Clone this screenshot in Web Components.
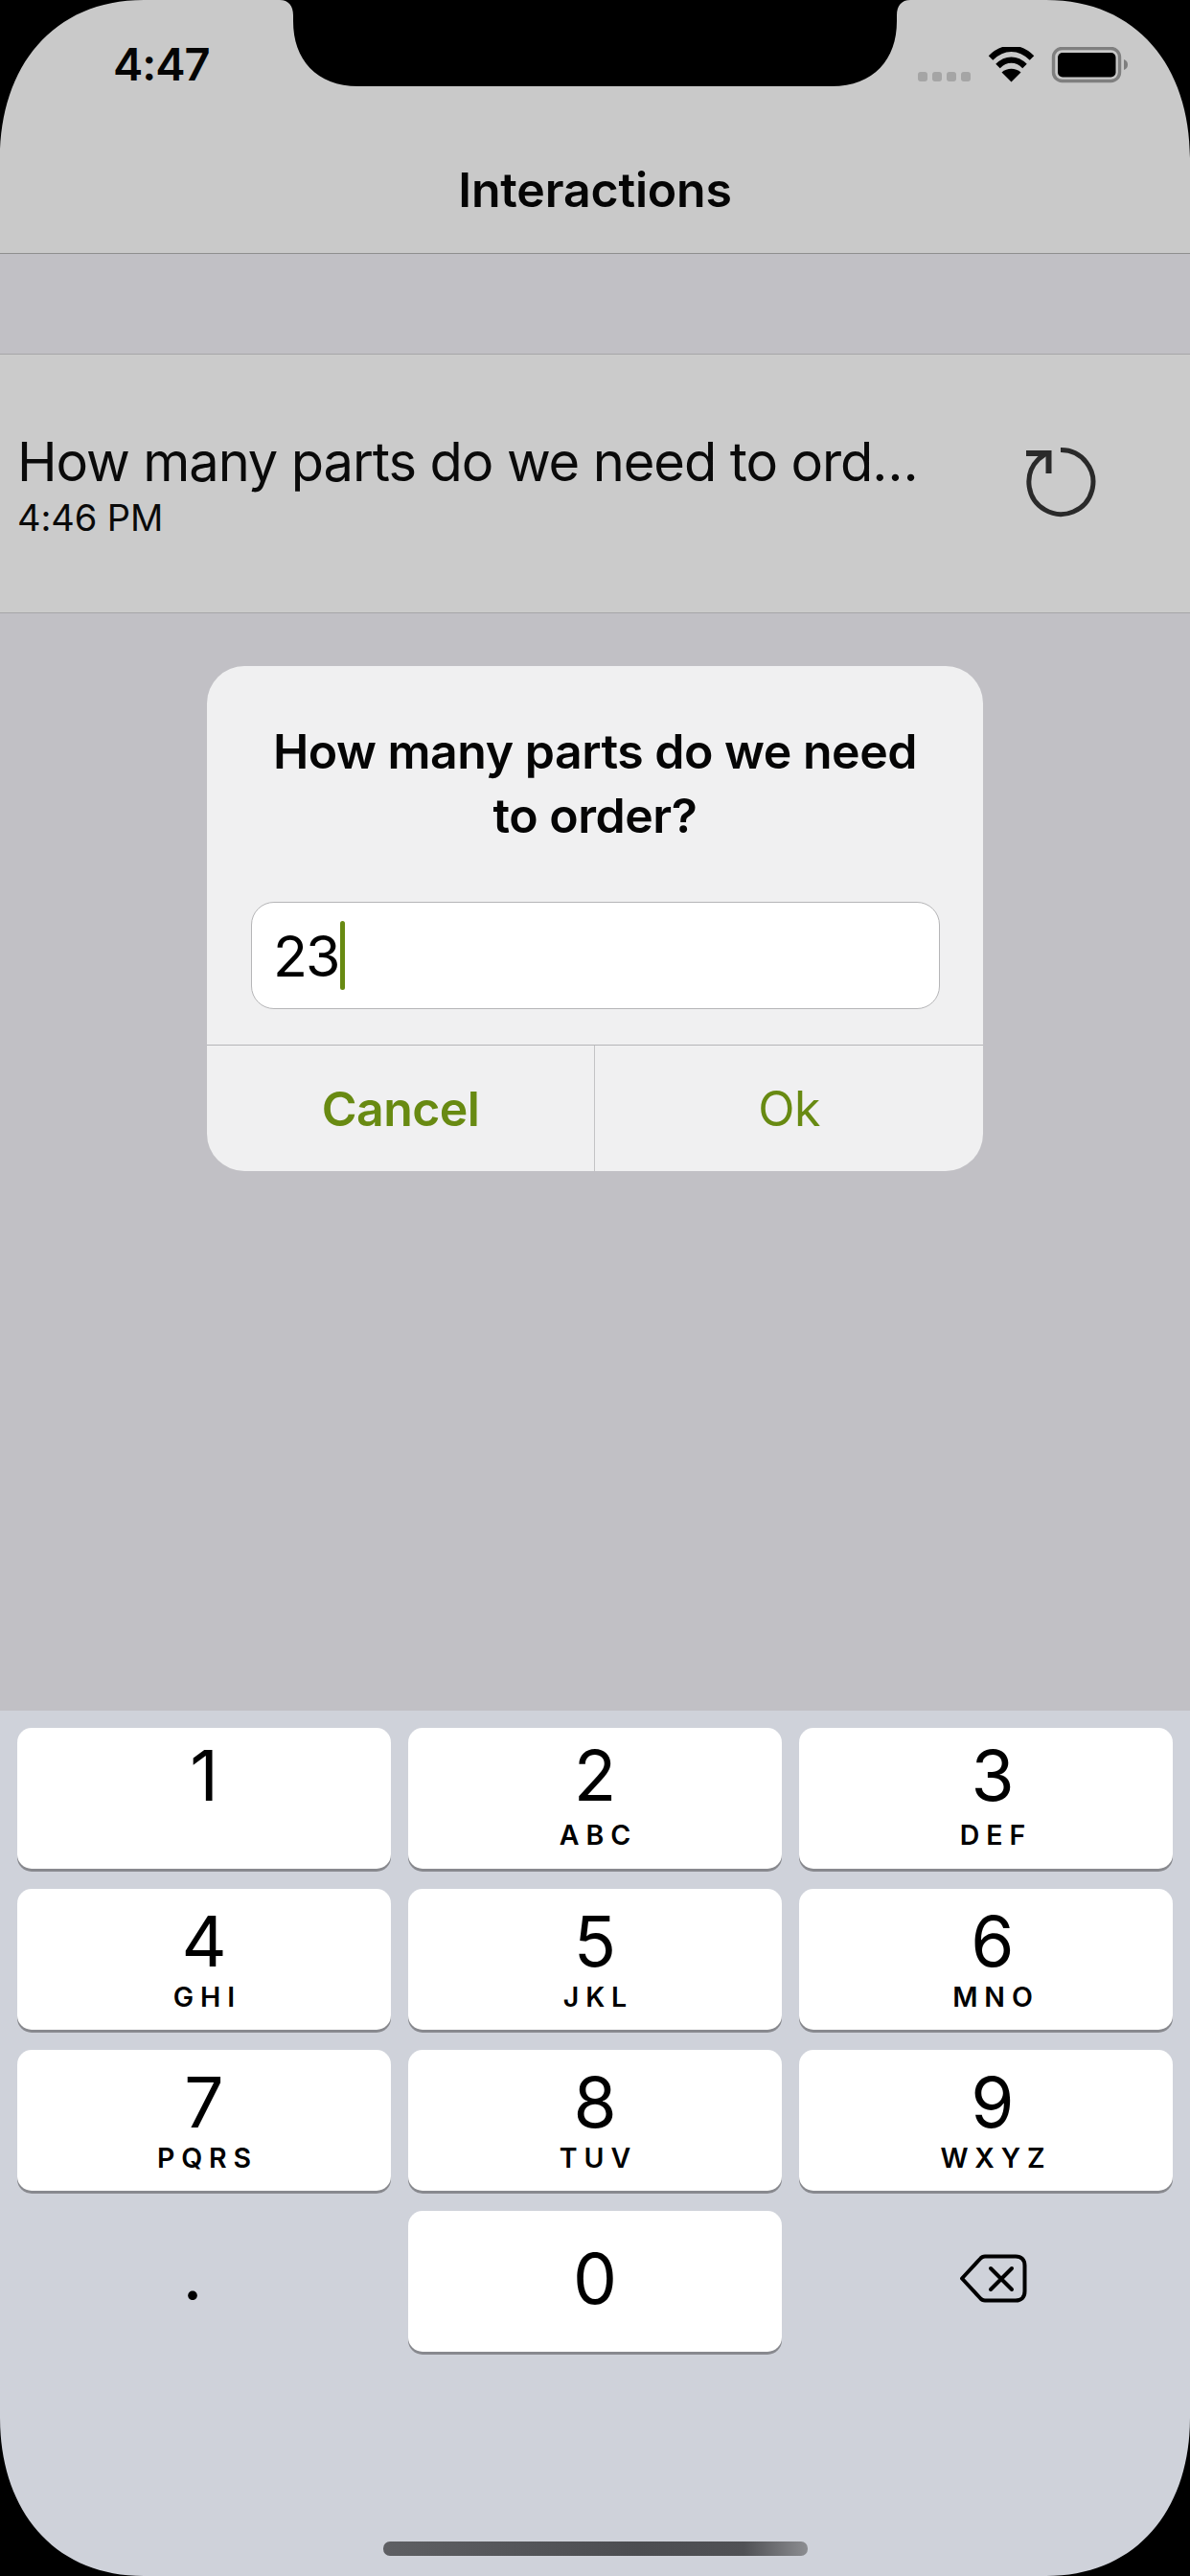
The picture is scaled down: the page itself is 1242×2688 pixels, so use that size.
<!DOCTYPE html>
<html>
<head>
<meta charset="utf-8">
<style>
html, body { margin: 0; padding: 0; background: #000; }
body { width: 1242px; height: 2688px; overflow: hidden; font-family: Inter, "Liberation Sans", sans-serif; color: #000; }
interactions-screen { height: 2688px; }
</style>
</head>
<body>
<interactions-screen>
  <status-bar slot="top" time="4:47"></status-bar>
  <nav-bar slot="top">Interactions</nav-bar>
  <interaction-row slot="list" time="4:46 PM">How many parts do we need to ord…</interaction-row>
  <alert-dialog slot="overlay" value="23" cancel="Cancel" ok="Ok">How many parts do we need<br>to order?</alert-dialog>
  <num-pad slot="keyboard">
    <num-key digit="1" high></num-key>
    <num-key digit="2" letters="ABC" high></num-key>
    <num-key digit="3" letters="DEF" high right></num-key>
    <num-key digit="4" letters="GHI"></num-key>
    <num-key digit="5" letters="JKL"></num-key>
    <num-key digit="6" letters="MNO" right></num-key>
    <num-key digit="7" letters="PQRS"></num-key>
    <num-key digit="8" letters="TUV"></num-key>
    <num-key digit="9" letters="WXYZ" right></num-key>
    <num-key digit="." plain></num-key>
    <num-key digit="0" lone></num-key>
    <delete-key></delete-key>
  </num-pad>
  <device-mask slot="overlay"></device-mask>
</interactions-screen>

<script>
const FONT = `Inter, "Liberation Sans", sans-serif`;
const GREEN = "#688a12";

class StatusBar extends HTMLElement {
  constructor() {
    super();
    var root = this.attachShadow({ mode: "open" });
    root.innerHTML = `
<style>
:host { display: flex; align-items: flex-start; justify-content: space-between; height: 90px; padding: 0 65px 0 118px; font-family: ${FONT}; }
.time { font-size: 47px; font-weight: 600; line-height: 34px; margin-top: 50px; letter-spacing: -1px; color: #050505; }
.icons { display: flex; align-items: flex-start; margin-top: 49px; }
svg { display: block; }
</style>
<div class="time"></div>
<div class="icons">
  <svg width="220" height="38" viewBox="957 49 220 38">
    <g fill="#a5a5a5">
      <rect x="958" y="75" width="10" height="10" rx="3"/>
      <rect x="973" y="75" width="10" height="10" rx="3"/>
      <rect x="988" y="75" width="10" height="10" rx="3"/>
      <rect x="1003" y="75" width="10" height="10" rx="3"/>
    </g>
    <g fill="none" stroke="#000" stroke-width="6.4">
      <path d="M1034 60.5 C1047 47.5 1064 47.5 1077 60.5"/>
      <path d="M1041.5 69 C1050 60.5 1061 60.5 1069.5 69"/>
    </g>
    <path d="M1055.5 85.5 L1045.5 75.5 C1051 70.5 1060 70.5 1065.5 75.5 Z" fill="#000"/>
    <rect x="1099.5" y="50.5" width="69" height="34" rx="9" fill="none" stroke="#7f7f7f" stroke-width="3.4"/>
    <rect x="1104" y="55" width="60.5" height="25.5" rx="5" fill="#000"/>
    <path d="M1173 62 C1176 63 1177 65 1177 67.5 C1177 70 1176 72 1173 73 Z" fill="#7f7f7f"/>
  </svg>
</div>`;
    root.querySelector(".time").textContent = this.getAttribute("time");
  }
}

class NavBar extends HTMLElement {
  constructor() {
    super();
    var root = this.attachShadow({ mode: "open" });
    root.innerHTML = `
<style>
:host { display: flex; justify-content: center; box-sizing: border-box; height: 175px; padding-top: 80px; border-bottom: 1px solid #8f8f8f; font-family: ${FONT}; font-size: 50px; font-weight: 600; line-height: 56px; letter-spacing: -0.17px; color: #050505; }
</style>
<slot></slot>`;
  }
}

class InteractionRow extends HTMLElement {
  constructor() {
    super();
    var root = this.attachShadow({ mode: "open" });
    root.innerHTML = `
<style>
:host { display: flex; justify-content: space-between; box-sizing: border-box; height: 271px; background: #cbcbcb; border-top: 1px solid #a6a6a8; border-bottom: 1px solid #a6a6a8; padding: 78px 98px 0 18px; font-family: ${FONT}; color: #0a0a0a; }
.title { font-size: 56px; line-height: 68px; letter-spacing: -1.1px; white-space: nowrap; }
.time { font-size: 38px; line-height: 44px; letter-spacing: -0.1px; margin-top: 2px; }
svg { display: block; margin-top: 18px; }
</style>
<div>
  <div class="title"><slot></slot></div>
  <div class="time"></div>
</div>
<svg width="74" height="74" viewBox="0 0 74 74" fill="none" stroke="#2a2a2a">
  <path d="M37 3.5 A33.5 33.5 0 1 1 14 13 L22 7" stroke-width="5"/>
  <path d="M1 7 H24.5 V28" stroke-width="6"/>
</svg>`;
    root.querySelector(".time").textContent = this.getAttribute("time");
  }
}

class AlertDialog extends HTMLElement {
  constructor() {
    super();
    var root = this.attachShadow({ mode: "open" });
    root.innerHTML = `
<style>
:host { display: block; position: absolute; left: 216px; top: 695px; width: 810px; height: 527px; box-sizing: border-box; background: #f0f0f1; border-radius: 39px; overflow: hidden; font-family: ${FONT}; }
.title { text-align: center; font-size: 50px; font-weight: 600; line-height: 67px; letter-spacing: -0.48px; padding-top: 56px; height: 191px; box-sizing: border-box; color: #050505; }
.field { display: flex; align-items: center; box-sizing: border-box; height: 112px; margin: 55px 45px 0 46px; padding-left: 22px; background: #fff; border: 1px solid #b5b5b7; border-radius: 24px; font-size: 59px; letter-spacing: -2px; }
.caret { width: 5px; height: 72px; margin-left: 2px; background: ${GREEN}; border-radius: 3px; }
.actions { display: grid; grid-template-columns: 405px 1fr; height: 134px; margin-top: 37px; border-top: 1px solid #b5b5b7; color: ${GREEN}; font-size: 50px; line-height: 56px; letter-spacing: -0.6px; }
.actions div { display: flex; justify-content: center; padding-top: 38px; box-sizing: border-box; }
.cancel { font-weight: 600; border-right: 1px solid #c3c3c5; }
</style>
<div class="title"><slot></slot></div>
<div class="field"><span class="value"></span><div class="caret"></div></div>
<div class="actions"><div class="cancel"></div><div class="ok"></div></div>`;
    root.querySelector(".value").textContent = this.getAttribute("value");
    root.querySelector(".cancel").textContent = this.getAttribute("cancel");
    root.querySelector(".ok").textContent = this.getAttribute("ok");
  }
}

class NumPad extends HTMLElement {
  constructor() {
    super();
    var root = this.attachShadow({ mode: "open" });
    root.innerHTML = `
<style>
:host { display: block; box-sizing: border-box; height: 903px; background: #cfd2da; padding: 18px 18px 0; }
.grid { display: grid; grid-template-columns: repeat(3, 390px); grid-auto-rows: 150px; column-gap: 18px; row-gap: 18px; }
.bar { width: 443px; height: 15px; margin: 195px auto 0; border-radius: 7px; background: linear-gradient(90deg, #5e5f63, #4c4d51 60%, #505155 85%, #8c8d91); }
</style>
<div class="grid"><slot></slot></div>
<div class="bar"></div>`;
  }
}

class NumKey extends HTMLElement {
  constructor() {
    super();
    var root = this.attachShadow({ mode: "open" });
    root.innerHTML = `
<style>
:host { display: block; font-family: ${FONT}; }
.key { display: flex; flex-direction: column; align-items: center; box-sizing: border-box; height: 147px; padding-top: 11px; background: #fff; border-radius: 15px; box-shadow: 0 3px 0 #88898e; color: #000; }
.digit { font-size: 73px; line-height: 88px; height: 88px; }
.letters { font-size: 28.5px; font-weight: 600; line-height: 34px; letter-spacing: 6.9px; margin: -3px -6.9px 0 0; }
:host([high]) .key { padding-top: 6px; }
:host([high]) .letters { margin-top: 1px; }
:host([right]) .key { padding-left: 14px; }
:host([lone]) .key { padding-top: 27px; }
:host([plain]) .key { background: none; box-shadow: none; padding: 23px 24px 0 0; }
</style>
<div class="key"><div class="digit"></div><div class="letters"></div></div>`;
    root.querySelector(".digit").textContent = this.getAttribute("digit");
    root.querySelector(".letters").textContent = this.getAttribute("letters") || "";
  }
}

class DeleteKey extends HTMLElement {
  constructor() {
    super();
    var root = this.attachShadow({ mode: "open" });
    root.innerHTML = `
<style>
:host { display: flex; justify-content: center; padding-top: 45px; padding-left: 16px; }
svg { display: block; }
</style>
<svg width="70" height="51" viewBox="0 0 70 51" fill="none" stroke="#000" stroke-width="4" stroke-linecap="round" stroke-linejoin="round">
  <path d="M2 25.5 L21 5 C22.5 3.2 24 2.5 26 2.5 H58 C64 2.5 67.5 6 67.5 12 V39 C67.5 45 64 48.5 58 48.5 H26 C24 48.5 22.5 47.8 21 46 Z"/>
  <path d="M32 15 L54 37 M54 15 L32 37"/>
</svg>`;
  }
}

// black corners and the notch lie over everything else
class DeviceMask extends HTMLElement {
  constructor() {
    super();
    var root = this.attachShadow({ mode: "open" });
    root.innerHTML = `
<style>
:host { display: block; position: absolute; inset: 0; pointer-events: none; }
svg { display: block; }
</style>
<svg width="1242" height="2688" viewBox="0 0 1242 2688" fill="#000">
  <path d="M0 0 H150 C55 0 0 70 0 165 Z"/>
  <path d="M1242 0 H1092 C1187 0 1242 70 1242 165 Z"/>
  <path d="M0 2688 H150 C55 2688 0 2618 0 2523 Z"/>
  <path d="M1242 2688 H1092 C1187 2688 1242 2618 1242 2523 Z"/>
  <path d="M292 0 C301 0 306 6 306 16 V22 C306 62 330 90 374 90 H868 C912 90 936 62 936 22 V16 C936 6 941 0 950 0 Z"/>
</svg>`;
  }
}

class InteractionsScreen extends HTMLElement {
  constructor() {
    super();
    var root = this.attachShadow({ mode: "open" });
    root.innerHTML = `
<style>
:host { display: flex; flex-direction: column; position: relative; width: 1242px; background: #c1c0c5; }
.top { background: #c9c9c9; }
.list { flex: 1; padding-top: 104px; }
</style>
<div class="top"><slot name="top"></slot></div>
<div class="list"><slot name="list"></slot></div>
<slot name="keyboard"></slot>
<slot name="overlay"></slot>`;
  }
}

customElements.define("status-bar", StatusBar);
customElements.define("nav-bar", NavBar);
customElements.define("interaction-row", InteractionRow);
customElements.define("alert-dialog", AlertDialog);
customElements.define("num-pad", NumPad);
customElements.define("num-key", NumKey);
customElements.define("delete-key", DeleteKey);
customElements.define("device-mask", DeviceMask);
customElements.define("interactions-screen", InteractionsScreen);
</script>
</body>
</html>
